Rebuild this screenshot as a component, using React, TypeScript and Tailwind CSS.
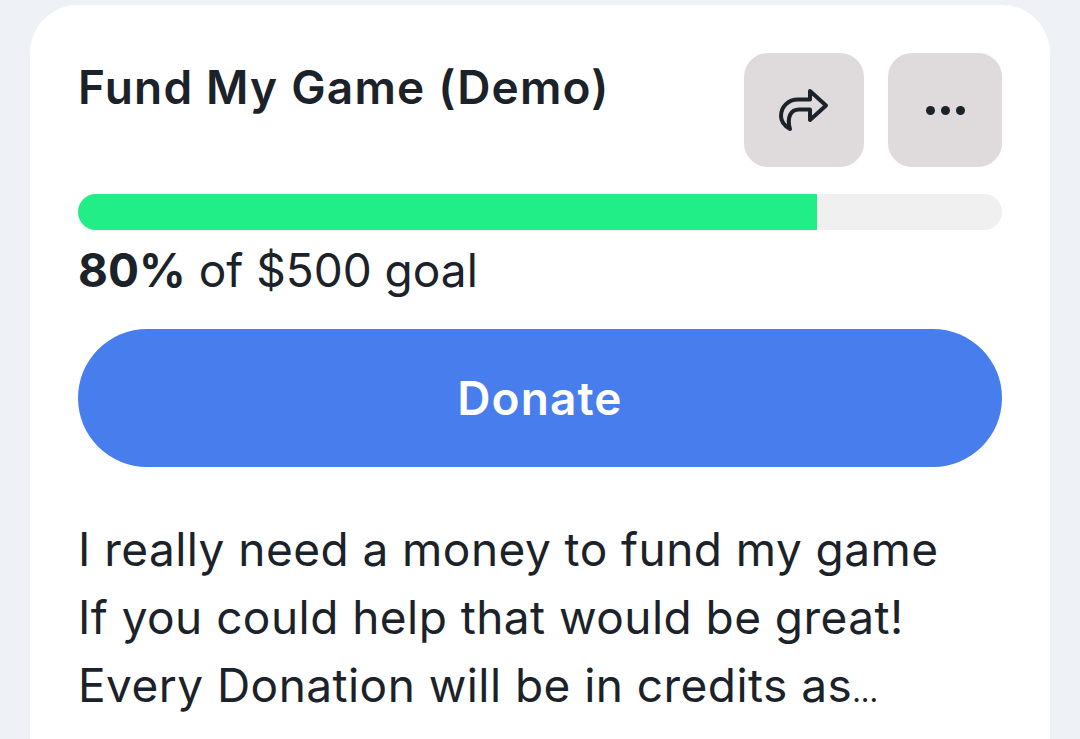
import React from 'react';

function ShareIcon() {
  return (
    <svg width="56" height="48" viewBox="0 0 56 48" fill="none" className="text-[#1b2229]">
      <path
        d="M34 5 L50 19.5 L34 34 V23.5 H23 C15 23.5 10.5 31 14 43 C7 39 5 35 5 30 C5 21 12 13.5 22 13.5 H34 Z"
        stroke="currentColor"
        strokeWidth="4"
        strokeLinejoin="round"
        strokeLinecap="round"
      />
    </svg>
  );
}

export default function App() {
  return (
    <div className="h-[739px] overflow-hidden bg-[#eef2f7] px-[30px] pt-[5px] font-['Inter',sans-serif] text-[#1b2229]">
      <div className="h-full rounded-t-[48px] bg-white px-[48px] pt-[48px]">
        <div className="flex items-start justify-between">
          <h1 className="mt-[7px] text-[46px] leading-[54px] font-semibold tracking-[1.2px]">Fund My Game (Demo)</h1>
          <div className="flex gap-[24px]">
            <button className="flex h-[114px] w-[120px] items-center justify-center rounded-[24px] bg-[#dfdbdc]">
              <ShareIcon />
            </button>
            <button className="flex h-[114px] w-[114px] items-center justify-center gap-[6px] rounded-[24px] bg-[#dfdbdc]">
              <span className="h-[9px] w-[9px] rounded-full bg-[#1b2229]" />
              <span className="h-[9px] w-[9px] rounded-full bg-[#1b2229]" />
              <span className="h-[9px] w-[9px] rounded-full bg-[#1b2229]" />
            </button>
          </div>
        </div>

        <div className="mt-[27px] h-[36px] overflow-hidden rounded-full bg-[#f0f0f0]">
          <div className="h-full w-[80%] bg-[#22ee88]" />
        </div>

        <p className="mt-[10px] text-[46px] leading-[60px]">
          <span className="font-bold">80%</span> of $500 goal
        </p>

        <button className="mt-[29px] flex h-[138px] w-full items-center justify-center rounded-full bg-[#477dec] text-[46px] font-semibold tracking-[1.1px] text-white">
          Donate
        </button>

        <p className="mt-[48px] text-[46px] leading-[68px] tracking-[0.45px]">
          I really need a money to fund my game
          <br />
          If you could help that would be great!
          <br />
          Every Donation will be in credits as<span className="text-[30px] tracking-normal">...</span>
        </p>
      </div>
    </div>
  );
}
